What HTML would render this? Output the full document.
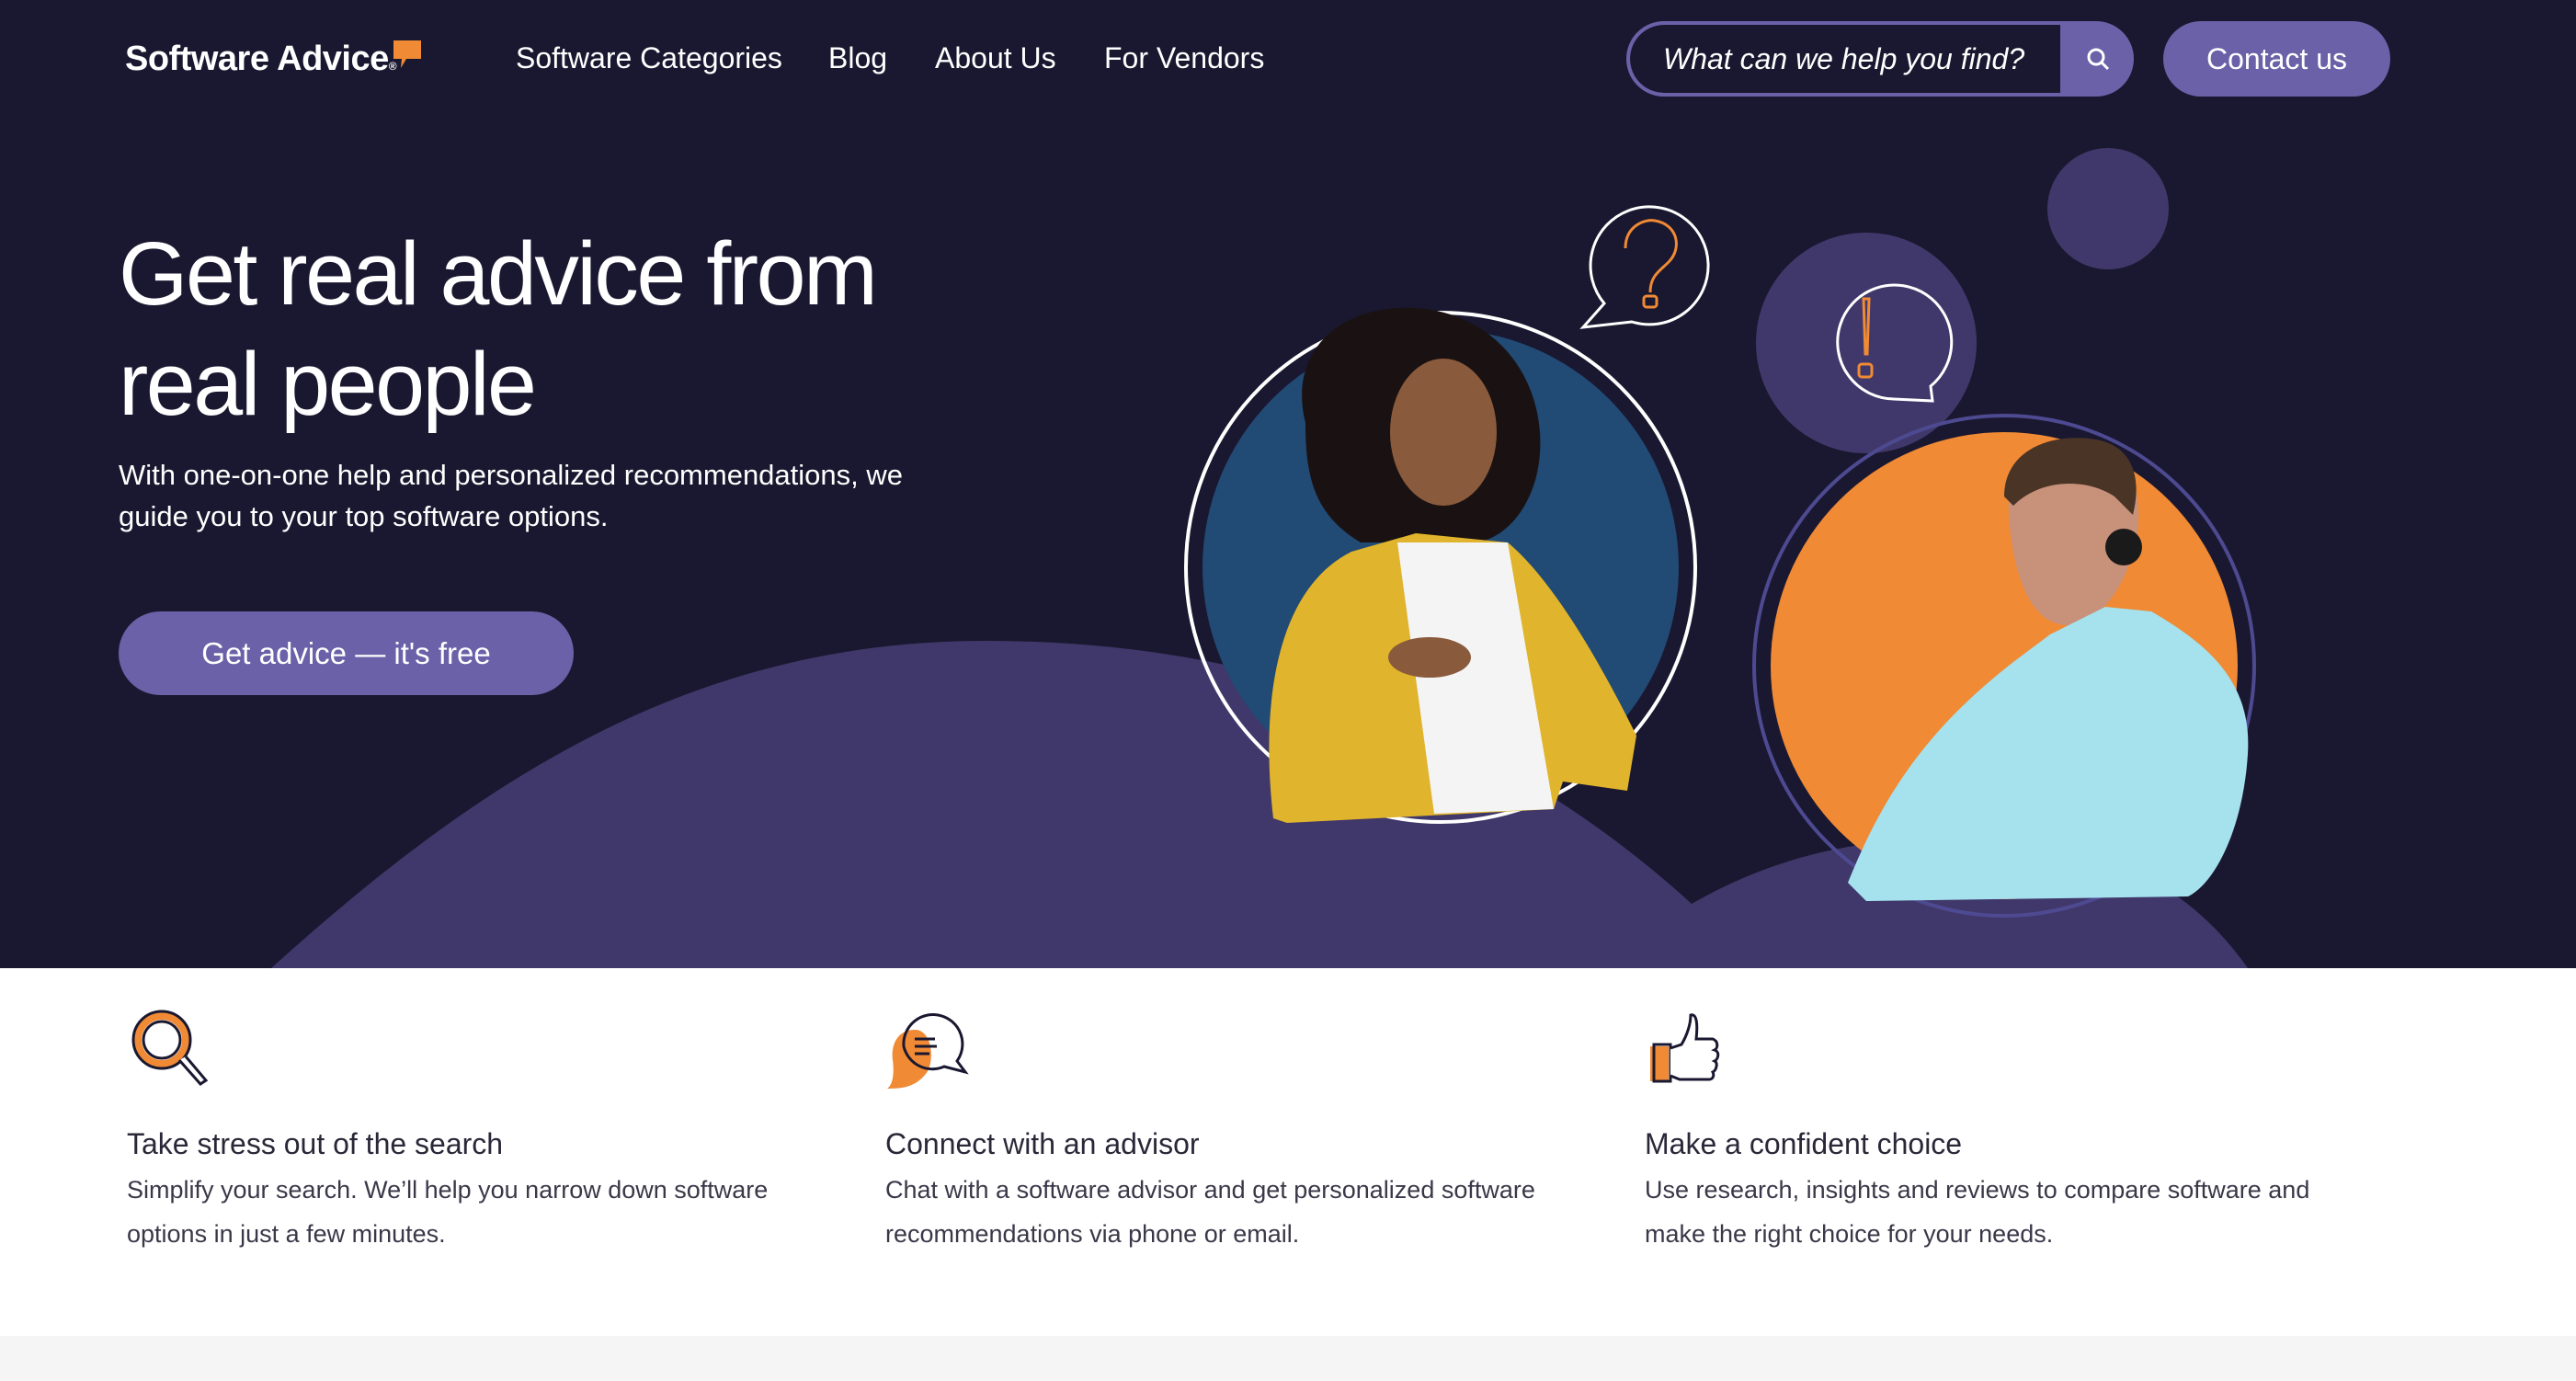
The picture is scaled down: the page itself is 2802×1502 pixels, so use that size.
<!DOCTYPE html>
<html><head><meta charset="utf-8"><style>
*{margin:0;padding:0;box-sizing:border-box}
body{width:2802px;height:1502px;overflow:hidden;background:#f5f5f6;font-family:"Liberation Sans",sans-serif;position:relative}
.hero{position:absolute;left:0;top:0;width:2802px;height:1053px;background:#1a1830;overflow:hidden}
.abs{position:absolute}
.nav{color:#fff;font-size:32px;top:45px}
.white{position:absolute;left:0;top:1053px;width:2802px;height:400px;background:#fff}
.ft{position:absolute;top:1226px;font-size:32px;color:#2a2838}
.fd{position:absolute;top:1270px;font-size:27px;line-height:48px;color:#3a3848}
</style></head><body>
<div class="hero">
<svg class="abs" style="left:0;top:0" width="2802" height="1053">
<path d="M295 1053 C520 850 750 697 1072 697 C1400 697 1650 810 1840 983 C1950 920 2050 911 2144 911 C2280 911 2380 960 2445 1053 Z" fill="#40386a"/>
<circle cx="2293" cy="227" r="66" fill="#40386a"/>
<circle cx="2030" cy="373" r="120" fill="#40386a"/>
<path d="M2100 420 A62 62 0 1 0 2060 434 L2102 436 Z" fill="none" stroke="#fff" stroke-width="3"/>
<path d="M2027 325 L2033 325 L2031 385 L2029 385 Z" fill="none" stroke="#f08a34" stroke-width="3"/>
<rect x="2022" y="396" width="14" height="14" rx="3" fill="none" stroke="#f08a34" stroke-width="3"/>
<path d="M1745 330 A64 64 0 1 1 1775 350 L1722 356 Z" fill="none" stroke="#fff" stroke-width="3"/>
<path d="M1768 270 C1768 245 1790 238 1800 240 C1825 244 1830 270 1815 285 C1805 295 1795 300 1795 318" fill="none" stroke="#f08a34" stroke-width="3"/>
<rect x="1788" y="322" width="14" height="12" rx="3" fill="none" stroke="#f08a34" stroke-width="3"/>
<circle cx="1567" cy="617" r="277" fill="none" stroke="#fff" stroke-width="4"/>
<circle cx="1567" cy="617" r="259" fill="#214a74"/>
<path d="M1420 460 C1400 380 1460 330 1540 335 C1620 340 1670 400 1675 470 C1680 540 1640 590 1600 590 L1480 590 C1430 560 1420 520 1420 460Z" fill="#1a1212"/>
<ellipse cx="1570" cy="470" rx="58" ry="80" fill="#8a5a3c"/>
<path d="M1385 890 C1370 760 1390 640 1470 600 L1540 580 L1640 590 C1700 640 1760 760 1780 800 L1770 860 L1700 850 L1690 880 L1400 895Z" fill="#e0b42c"/>
<path d="M1520 590 L1640 590 L1690 880 L1560 885Z" fill="#f4f4f4"/>
<ellipse cx="1555" cy="715" rx="45" ry="22" fill="#8a5a3c"/>
<circle cx="2180" cy="724" r="272" fill="none" stroke="#4e4a92" stroke-width="4"/>
<circle cx="2180" cy="724" r="254" fill="#f08a34"/>
<path d="M2185 560 C2180 490 2240 470 2280 480 C2320 490 2330 540 2325 580 C2315 640 2280 680 2250 680 C2210 680 2190 630 2185 560Z" fill="#c8917a"/>
<path d="M2180 540 C2180 490 2230 470 2280 478 C2320 485 2330 520 2320 560 L2300 540 C2270 520 2220 520 2190 550Z" fill="#4a3426"/>
<circle cx="2310" cy="595" r="20" fill="#1a1a1a"/>
<path d="M2010 960 C2050 860 2100 790 2190 720 L2230 690 L2290 660 L2340 665 C2400 700 2450 740 2445 820 C2440 900 2410 960 2380 975 L2030 980Z" fill="#a6e1ee"/>
</svg>
<div class="abs" style="left:136px;top:43px;color:#fff;font-weight:bold;font-size:38px;letter-spacing:-0.5px">Software Advice<span style="font-size:12px">®</span></div>
<svg class="abs" style="left:428px;top:44px" width="32" height="30"><path d="M0 0 H30 V20 H14 L8 30 L9 20 H0 Z" fill="#f08a34"/></svg>
<div class="abs nav" style="left:561px">Software Categories</div>
<div class="abs nav" style="left:901px">Blog</div>
<div class="abs nav" style="left:1017px">About Us</div>
<div class="abs nav" style="left:1201px">For Vendors</div>
<div class="abs" style="left:1769px;top:23px;width:552px;height:82px;border:4px solid #6a61a8;border-radius:41px;background:#6a61a8;overflow:hidden">
<div style="position:absolute;left:0;top:0;width:468px;height:74px;background:#1a1830;border-radius:37px 0 0 37px;color:#fff;font-style:italic;font-size:32px;line-height:74px;padding-left:36px">What can we help you find?</div>
<svg style="position:absolute;left:496px;top:24px" width="28" height="28"><circle cx="11" cy="11" r="8" fill="none" stroke="#fff" stroke-width="3"/><path d="M17 17 L24 24" stroke="#fff" stroke-width="3"/></svg>
</div>
<div class="abs" style="left:2353px;top:23px;width:247px;height:82px;border-radius:41px;background:#6a61a8;color:#fff;font-size:32px;line-height:82px;text-align:center">Contact us</div>
<div class="abs" style="left:129px;top:238px;color:#fff;font-size:97px;line-height:120px;letter-spacing:-2.5px">Get real advice from<br>real people</div>
<div class="abs" style="left:129px;top:494px;color:#fff;font-size:31px;line-height:45px;width:910px">With one-on-one help and personalized recommendations, we guide you to your top software options.</div>
<div class="abs" style="left:129px;top:665px;width:495px;height:91px;border-radius:46px;background:#6a61a8;color:#fff;font-size:33px;line-height:91px;text-align:center">Get advice — it's free</div>
</div>
<div class="white"></div>
<svg class="abs" style="left:140px;top:1095px" width="90" height="90"><circle cx="36" cy="36" r="26" fill="none" stroke="#f08a34" stroke-width="8"/><circle cx="36" cy="36" r="31" fill="none" stroke="#1a1830" stroke-width="3"/><circle cx="36" cy="36" r="20" fill="none" stroke="#1a1830" stroke-width="3"/><path d="M55 58 L78 84 L84 80 L62 54" fill="#fff" stroke="#1a1830" stroke-width="3"/></svg>
<svg class="abs" style="left:965px;top:1098px" width="90" height="90"><path d="M30 22 C10 22 4 40 6 55 C8 70 6 82 0 86 C15 86 30 85 42 70 C52 58 50 22 30 22Z" fill="#f08a34"/><path d="M18 40 A32 32 0 1 1 76 56 L85 68 L62 62 A32 32 0 0 1 18 40Z" fill="none" stroke="#1a1830" stroke-width="3"/><path d="M30 32 H52 M30 40 H54 M30 48 H46" stroke="#1a1830" stroke-width="3"/></svg>
<svg class="abs" style="left:1793px;top:1100px" width="90" height="80"><rect x="2" y="38" width="20" height="38" fill="#f08a34"/><rect x="6" y="36" width="18" height="40" fill="none" stroke="#1a1830" stroke-width="3"/><path d="M24 40 L36 36 C42 26 46 14 46 4 C52 2 54 12 52 30 L70 30 C76 32 76 40 72 42 C78 44 76 52 72 54 C76 56 74 64 70 66 C72 70 70 74 66 74 L34 74 L24 70" fill="#fff" stroke="#1a1830" stroke-width="3"/></svg>
<div class="ft" style="left:138px">Take stress out of the search</div>
<div class="fd" style="left:138px;width:780px">Simplify your search. We’ll help you narrow down software options in just a few minutes.</div>
<div class="ft" style="left:963px">Connect with an advisor</div>
<div class="fd" style="left:963px;width:780px">Chat with a software advisor and get personalized software recommendations via phone or email.</div>
<div class="ft" style="left:1789px">Make a confident choice</div>
<div class="fd" style="left:1789px;width:780px">Use research, insights and reviews to compare software and make the right choice for your needs.</div>
</body></html>
